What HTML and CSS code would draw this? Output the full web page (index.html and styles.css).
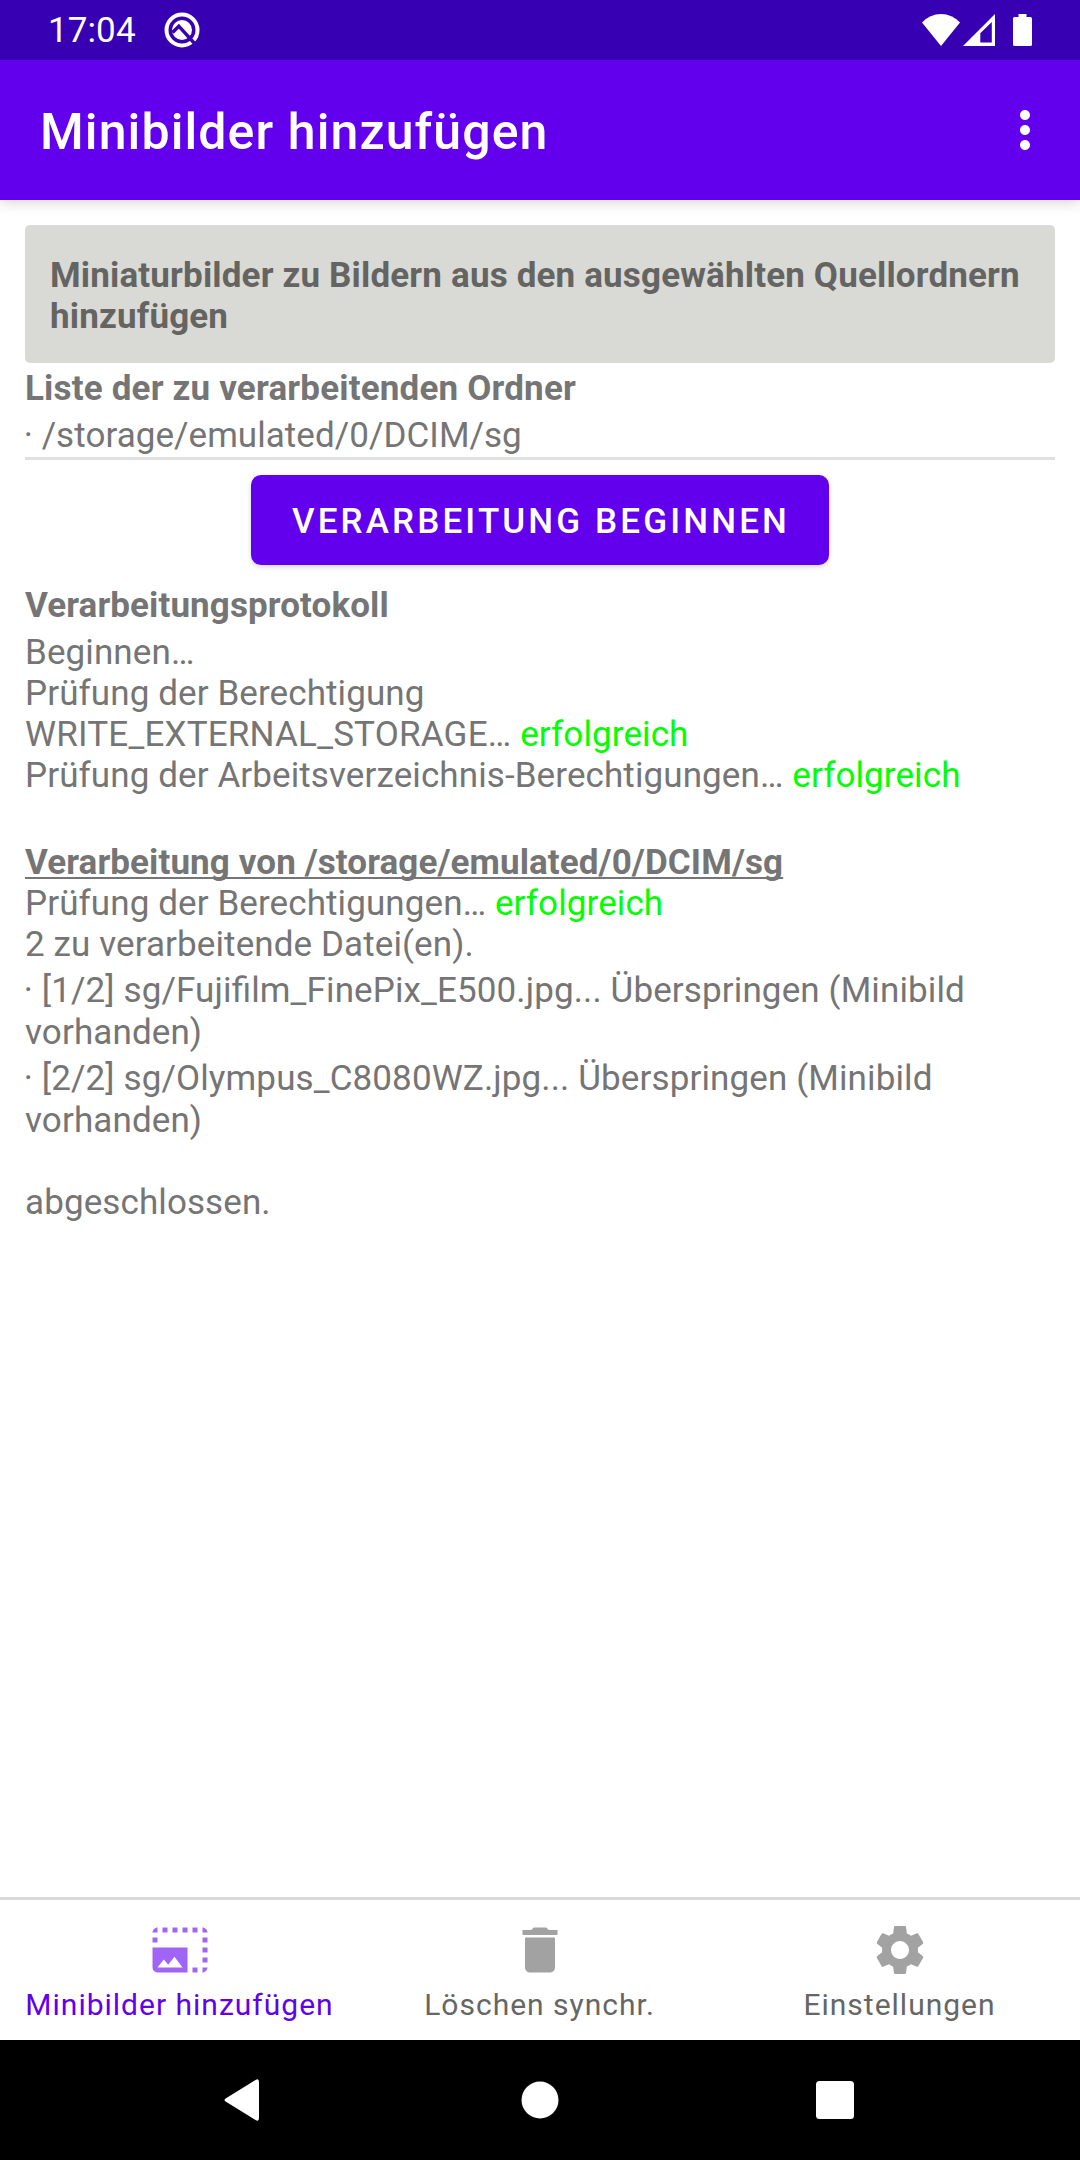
FILE: index.html
```html
<!DOCTYPE html>
<html lang="de">
<head>
<meta charset="utf-8">
<title>Minibilder hinzufügen</title>
<link rel="stylesheet" href="styles.css">
</head>
<body>
<div class="statusbar">
  <span class="clock">17:04</span>
  <svg class="notif" width="36" height="36" viewBox="0 0 36 36">
    <circle cx="18" cy="18" r="15.500" fill="none" stroke="#fff" stroke-width="4"/>
    <circle cx="18" cy="18" r="10" fill="#fff"/>
    <path d="M8.500 20.500 14.800 14.200 31.500 32.500" fill="none" stroke="#3700b3" stroke-width="3.400"/>
  </svg>
  <div class="indicators">
    <svg class="wifi" width="38" height="32" viewBox="0 0 38 32"><path d="M0 8.500Q8 0 19 0T38 8.500L19 32z" fill="#fff"/></svg>
    <svg class="signal" width="32" height="32" viewBox="0 0 32 32"><path d="M32 0V32H0zM28.800 8L17.300 19.200V28.600H28.800z" fill="#fff" fill-rule="evenodd"/></svg>
    <svg class="battery" width="19" height="32" viewBox="0 0 19 32"><path d="M5.500 0h8v3H17.500q1.500 0 1.500 1.500v26q0 1.500-1.500 1.500h-16Q0 32 0 30.500v-26Q0 3 1.500 3h4z" fill="#fff"/></svg>
  </div>
</div>
<header class="appbar">
  <h1 class="title">Minibilder hinzufügen</h1>
  <svg class="more" width="60" height="60" viewBox="0 0 24 24"><path fill="#fff" d="M12 8c1.100 0 2-.9 2-2s-.9-2-2-2-2 .9-2 2 .9 2 2 2zm0 2c-1.100 0-2 .9-2 2s.9 2 2 2 2-.9 2-2-.9-2-2-2zm0 6c-1.100 0-2 .9-2 2s.9 2 2 2 2-.9 2-2-.9-2-2-2z"/></svg>
</header>
<main class="content">
  <div class="card">Miniaturbilder zu Bildern aus den ausgewählten Quellordnern hinzufügen</div>
  <h2 class="heading folders-heading">Liste der zu verarbeitenden Ordner</h2>
  <p class="folder">· /storage/emulated/0/DCIM/sg</p>
  <button class="start" type="button">VERARBEITUNG BEGINNEN</button>
  <h2 class="heading">Verarbeitungsprotokoll</h2>
  <div class="log">
    <p>Beginnen…</p>
    <p>Prüfung der Berechtigung<br><span class="permission">WRITE_EXTERNAL_STORAGE…</span> <span class="ok">erfolgreich</span></p>
    <p>Prüfung der Arbeitsverzeichnis-Berechtigungen… <span class="ok">erfolgreich</span></p>
    <p class="section"><span class="underlined">Verarbeitung von /storage/emulated/0/DCIM/sg</span></p>
    <p>Prüfung der Berechtigungen… <span class="ok">erfolgreich</span></p>
    <p>2 zu verarbeitende Datei(en).</p>
    <ul class="items">
      <li>· [1/2] sg/Fujifilm_FinePix_E500.jpg... Überspringen (Minibild vorhanden)</li>
      <li>· [2/2] sg/Olympus_C8080WZ.jpg... Überspringen (Minibild vorhanden)</li>
    </ul>
    <p class="done">abgeschlossen.</p>
  </div>
</main>
<nav class="tabs">
  <a class="tab active">
    <svg width="60" height="60" viewBox="0 0 24 24"><path d="M21,15H23V17H21V15M21,11H23V13H21V11M23,19H21V21C22,21 23,20 23,19M13,3H15V5H13V3M21,7H23V9H21V7M21,3V5H23C23,4 22,3 21,3M1,7H3V9H1V7M17,3H19V5H17V3M17,19H19V21H17V19M3,3C2,3 1,4 1,5H3V3M9,3H11V5H9V3M5,3H7V5H5V3M1,11V19A2,2 0 0,0 3,21H15V11H1M3,19L5.500,15.790L7.290,17.940L9.790,14.720L13,19H3Z"/></svg>
    <span>Minibilder hinzufügen</span>
  </a>
  <a class="tab">
    <svg width="60" height="60" viewBox="0 0 24 24"><path d="M6 19c0 1.100.9 2 2 2h8c1.100 0 2-.9 2-2V7H6v12zM19 4h-3.500l-1-1h-5l-1 1H5v2h14V4z"/></svg>
    <span>Löschen synchr.</span>
  </a>
  <a class="tab">
    <svg width="60" height="60" viewBox="0 0 24 24"><path d="M19.140,12.940c0.040-0.300,0.060-0.610,0.060-0.940c0-0.320-0.020-0.640-0.070-0.940l2.030-1.580c0.180-0.140,0.230-0.410,0.120-0.610l-1.920-3.320c-0.120-0.220-0.370-0.290-0.590-0.220l-2.390,0.960c-0.500-0.380-1.030-0.700-1.620-0.940L14.400,2.810c-0.040-0.240-0.240-0.410-0.480-0.410h-3.840c-0.240,0-0.430,0.170-0.470,0.410L9.250,5.350C8.660,5.590,8.120,5.920,7.630,6.290L5.240,5.330c-0.220-0.080-0.470,0-0.590,0.220L2.740,8.870C2.620,9.080,2.660,9.340,2.860,9.480l2.030,1.580C4.840,11.360,4.800,11.690,4.800,12s0.020,0.640,0.070,0.940l-2.030,1.580c-0.180,0.140-0.230,0.410-0.120,0.610l1.920,3.320c0.120,0.220,0.370,0.290,0.590,0.220l2.390-0.960c0.500,0.380,1.030,0.700,1.620,0.940l0.360,2.540c0.050,0.240,0.240,0.410,0.480,0.410h3.840c0.240,0,0.440-0.170,0.470-0.410l0.360-2.540c0.590-0.240,1.130-0.560,1.620-0.940l2.390,0.960c0.220,0.080,0.470,0,0.590-0.220l1.920-3.320c0.120-0.220,0.070-0.470-0.120-0.610L19.140,12.940z M12,15.600c-1.980,0-3.600-1.620-3.600-3.600s1.620-3.600,3.600-3.600s3.600,1.620,3.600,3.600S13.980,15.600,12,15.600z"/></svg>
    <span>Einstellungen</span>
  </a>
</nav>
<footer class="sysnav">
  <svg class="back" width="36" height="42" viewBox="0 0 36 42"><path d="M2 19.200 31.500 1Q35 -1 35 3V39Q35 43 31.500 41L2 22.800Q-1 21 2 19.200z" fill="#fff"/></svg>
  <svg class="home" width="38" height="38" viewBox="0 0 38 38"><circle cx="19" cy="19" r="18.500" fill="#fff"/></svg>
  <svg width="38" height="38" viewBox="0 0 38 38"><rect width="38" height="38" rx="3.500" fill="#fff"/></svg>
</footer>
</body>
</html>
```
FILE: styles.css
```css
* { box-sizing: border-box; margin: 0; padding: 0; }

body {
  width: 1080px;
  height: 2160px;
  display: flex;
  flex-direction: column;
  overflow: hidden;
  background: #fff;
  color: #757575;
  font-family: Roboto, sans-serif;
  font-size: 35px;
  line-height: 41px;
  letter-spacing: 0.1px;
  font-feature-settings: "liga" 1;
}

.statusbar {
  position: relative;
  z-index: 1;
  height: 60px;
  flex: none;
  display: flex;
  align-items: center;
  padding: 0 48px;
  background: #3700b3;
  color: #fff;
  letter-spacing: 0;
}
.clock { padding-top: 1px; letter-spacing: 0.1px; }
.notif { margin-left: 28px; }
.indicators { display: flex; margin-left: auto; }
.signal { margin-left: 3px; }
.battery { margin-left: 18px; }

.appbar {
  height: 140px;
  flex: none;
  display: flex;
  align-items: center;
  justify-content: space-between;
  padding: 0 25px 0 40px;
  background: #6200ee;
  color: #fff;
  box-shadow: 0 3px 12px rgba(0, 0, 0, 0.16);
}
.title {
  padding-top: 4px;
  font-size: 50px;
  font-weight: 500;
  line-height: 60px;
  letter-spacing: 0.022em;
}

.content {
  flex: 1;
  display: flex;
  flex-direction: column;
  padding: 25px 25px 0;
}
.card {
  padding: 30px 25px 26px;
  border-radius: 5px;
  background: #d9dad5;
  color: #646462;
  font-weight: 700;
  letter-spacing: 0.16px;
}
.heading {
  margin-top: 5px;
  font-size: 35px;
  font-weight: 700;
}
.folders-heading { letter-spacing: 0.18px; }
.folder {
  padding: 6px 0 1px;
  border-bottom: 3px solid #e0e0e0;
  letter-spacing: 0.05px;
  text-indent: -1.3px;
}
.start {
  align-self: center;
  width: 578px;
  height: 90px;
  margin: 15px 0;
  padding: 2px 0 0 2px;
  border: 0;
  border-radius: 10px;
  background: #6200ee;
  box-shadow: 0 2px 5px rgba(0, 0, 0, 0.17);
  color: #fff;
  font: 500 35px/41px Roboto, sans-serif;
  letter-spacing: 0.0893em;
}
.log { padding-top: 6px; }
.permission { letter-spacing: 0.2px; }
.ok { color: #00ff00; }
.section { margin-top: 46px; font-weight: 700; }
.underlined {
  text-decoration: underline;
  text-decoration-thickness: 2px;
  text-underline-offset: 3px;
  text-decoration-skip-ink: none;
}
.items {
  display: grid;
  gap: 4px;
  margin-top: 5px;
  line-height: 42px;
  letter-spacing: 0.12px;
  text-indent: -1.3px;
  list-style: none;
}
.done { margin-top: 40px; }

.tabs {
  height: 143px;
  flex: none;
  display: grid;
  grid-template-columns: repeat(3, 1fr);
  border-top: 3px solid #d8d8d8;
}
.tab {
  display: flex;
  flex-direction: column;
  align-items: center;
  padding-top: 20px;
  color: #666;
  font-size: 30px;
  line-height: 35px;
  letter-spacing: 0.0333em;
}
.tab svg { fill: currentColor; opacity: 0.6; }
.tab span { margin-top: 7px; padding-right: 1px; white-space: nowrap; }
.active { color: #6200ee; }

.sysnav {
  height: 120px;
  flex: none;
  display: flex;
  align-items: center;
  justify-content: space-between;
  padding: 0 226px 0 224px;
  background: #000;
}
.home { margin-left: 4px; }
```
